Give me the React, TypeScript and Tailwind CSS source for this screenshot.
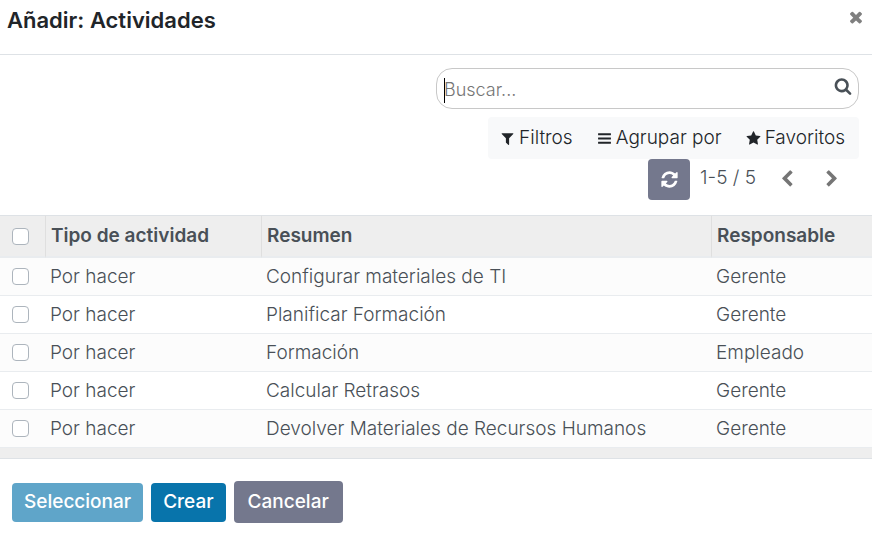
type IconProps = { path: string; className: string };

const ICONS = {
  filter:
    'M1595 295q17 41-14 70l-493 493v742q0 42-39 59-13 5-25 5-27 0-45-19l-256-256q-19-19-19-45v-486l-493-493q-31-29-14-70 17-39 59-39h1280q42 0 59 39z',
  bars: 'M1664 1344v128q0 26-19 45t-45 19h-1408q-26 0-45-19t-19-45v-128q0-26 19-45t45-19h1408q26 0 45 19t19 45zm0-512v128q0 26-19 45t-45 19h-1408q-26 0-45-19t-19-45v-128q0-26 19-45t45-19h1408q26 0 45 19t19 45zm0-512v128q0 26-19 45t-45 19h-1408q-26 0-45-19t-19-45v-128q0-26 19-45t45-19h1408q26 0 45 19t19 45z',
  star: 'M1728 647q0 22-26 48l-363 354 86 500q1 7 1 20 0 21-10.5 35.5t-30.5 14.5q-19 0-40-12l-449-236-449 236q-22 12-40 12-21 0-31.5-14.5t-10.5-35.5q0-6 2-20l86-500-364-354q-25-27-25-48 0-37 56-46l502-73 225-455q19-41 49-41t49 41l225 455 502 73q56 9 56 46z',
  refresh:
    'M1639 1056q0 5-1 7-64 268-268 434.5t-478 166.5q-146 0-282.5-55t-243.5-157l-129 129q-19 19-45 19t-45-19-19-45v-448q0-26 19-45t45-19h448q26 0 45 19t19 45-19 45l-137 137q71 66 161 102t187 36q134 0 250-65t186-179q11-17 53-117 8-23 30-23h192q13 0 22.5 9.5t9.5 22.5zm25-800v448q0 26-19 45t-45 19h-448q-26 0-45-19t-19-45 19-45l138-138q-148-137-349-137-134 0-250 65t-186 179q-11 17-53 117-8 23-30 23h-199q-13 0-22.5-9.5t-9.5-22.5v-7q65-268 270-434.5t480-166.5q146 0 284 55.5t245 156.5l130-129q19-19 45-19t45 19 19 45z',
  search:
    'M1216 832q0-185-131.5-316.5t-316.5-131.5-316.5 131.5-131.5 316.5 131.5 316.5 316.5 131.5 316.5-131.5 131.5-316.5zm512 832q0 52-38 90t-90 38q-54 0-90-38l-343-342q-179 124-399 124-143 0-273.5-55.5t-225-150-150-225-55.5-273.5 55.5-273.5 150-225 225-150 273.5-55.5 273.5 55.5 225 150 150 225 55.5 273.5q0 220-124 399l343 343q37 37 37 90z',
  times:
    'M1490 1322q0 40-28 68l-136 136q-28 28-68 28t-68-28l-294-294-294 294q-28 28-68 28t-68-28l-136-136q-28-28-28-68t28-68l294-294-294-294q-28-28-28-68t28-68l136-136q28-28 68-28t68 28l294 294 294-294q28-28 68-28t68 28l136 136q28 28 28 68t-28 68l-294 294 294 294q28 28 28 68z',
  left: 'M1427 301l-531 531 531 531q19 19 19 45t-19 45l-166 166q-19 19-45 19t-45-19l-742-742q-19-19-19-45t19-45l742-742q19-19 45-19t45 19l166 166q19 19 19 45t-19 45z',
  right:
    'M1363 877l-742 742q-19 19-45 19t-45-19l-166-166q-19-19-19-45t19-45l531-531-531-531q-19-19-19-45t19-45l166-166q19-19 45-19t45 19l742 742q19 19 19 45t-19 45z',
};

function Icon({ path, className }: IconProps) {
  return (
    <svg viewBox="0 0 1792 1792" fill="currentColor" aria-hidden="true" className={className}>
      <path d={path} />
    </svg>
  );
}

const ROWS = [
  ['Por hacer', 'Configurar materiales de TI', 'Gerente'],
  ['Por hacer', 'Planificar Formación', 'Gerente'],
  ['Por hacer', 'Formación', 'Empleado'],
  ['Por hacer', 'Calcular Retrasos', 'Gerente'],
  ['Por hacer', 'Devolver Materiales de Recursos Humanos', 'Gerente'],
];

function Tick({ label }: { label: string }) {
  return (
    <input
      type="checkbox"
      aria-label={label}
      className="block size-[17px] appearance-none rounded border border-[#adb5bd] bg-white checked:bg-[#0874ab]"
    />
  );
}

export default function App() {
  return (
    <div className="bg-white font-[Inter,'Noto_Sans',sans-serif] text-[19px] leading-7 font-light text-[#495057]">
      <header className="flex h-[55px] items-start justify-between border-b border-[#dee2e6] px-[7px] pt-1">
        <h1 className="text-[22px] leading-8 font-semibold text-[#212529]">Añadir: Actividades</h1>
        <button type="button" aria-label="Cerrar" className="mt-1 text-[#7f7f7f]">
          <Icon path={ICONS.times} className="size-[18px]" />
        </button>
      </header>

      <section className="flex flex-col items-end pt-[13px] pr-[13px]">
        <div className="relative flex h-[41px] w-[423px] items-center rounded-2xl border border-[#c8c8c8] pr-1.5 pl-[7px]">
          <input
            type="text"
            aria-label="Buscar"
            placeholder="Buscar..."
            className="h-full min-w-0 flex-1 pt-0.5 text-lg outline-none placeholder:text-[#757575]"
          />
          <span className="absolute top-[9px] left-[7px] h-[25px] w-px bg-black" />
          <button type="button" aria-label="Buscar" className="mb-1.5">
            <Icon path={ICONS.search} className="size-[18px]" />
          </button>
        </div>

        <div className="mt-2 flex h-[42px] items-center gap-6 rounded bg-[#f8f9fa] pr-3.5 pl-3 text-[#212529]">
          <button type="button" className="flex items-center gap-1">
            <Icon path={ICONS.filter} className="size-[15px]" />
            Filtros
          </button>
          <button type="button" className="flex items-center gap-1">
            <Icon path={ICONS.bars} className="size-[15px]" />
            Agrupar por
          </button>
          <button type="button" className="flex items-center gap-1">
            <Icon path={ICONS.star} className="size-[15px]" />
            Favoritos
          </button>
        </div>

        <div className="flex items-center pr-[18px]">
          <button
            type="button"
            aria-label="Actualizar"
            className="flex h-[41px] w-[42px] items-center justify-center rounded bg-[#74788d] text-white"
          >
            <Icon path={ICONS.refresh} className="size-[19px]" />
          </button>
          <span className="mb-1 ml-2.5">1-5 / 5</span>
          <button type="button" aria-label="Anterior" className="mb-0.5 ml-[22px] text-[#757575]">
            <Icon path={ICONS.left} className="size-[18px]" />
          </button>
          <button type="button" aria-label="Siguiente" className="mb-0.5 ml-[27px] text-[#757575]">
            <Icon path={ICONS.right} className="size-[18px]" />
          </button>
        </div>
      </section>

      <table className="mt-[15px] w-full table-fixed border-separate border-spacing-0 text-left">
        <colgroup>
          <col className="w-[45px]" />
          <col className="w-[216px]" />
          <col />
          <col className="w-[161px]" />
        </colgroup>
        <thead>
          <tr className="h-[43px] bg-[#eeeeee]">
            <th className="border-t border-b-2 border-t-[#dee2e6] border-b-[#e9ecef] pl-3">
              <Tick label="Seleccionar todo" />
            </th>
            {['Tipo de actividad', 'Resumen', 'Responsable'].map((title) => (
              <th
                key={title}
                className="border-t border-b-2 border-l border-t-[#dee2e6] border-b-[#e9ecef] border-l-[#dfdfdf] pl-[5px] font-semibold"
              >
                {title}
              </th>
            ))}
          </tr>
        </thead>
        <tbody>
          {ROWS.map((row, index) => (
            <tr key={row[1]} className="h-[38px] odd:bg-[#fcfcfc]">
              <td className="border-b border-[#e9ecef] pl-3">
                <Tick label={`Seleccionar fila ${index + 1}`} />
              </td>
              {row.map((value, column) => (
                <td key={column} className="border-b border-[#e9ecef] pl-[5px] whitespace-nowrap">
                  {value}
                </td>
              ))}
            </tr>
          ))}
        </tbody>
        <tfoot>
          <tr className="h-[11px] bg-[#eeeeee]">
            <td colSpan={4} className="border-b border-[#dee2e6] p-0" />
          </tr>
        </tfoot>
      </table>

      <footer className="flex items-center gap-2 px-3 pt-[22px] pb-[11px] font-medium text-white">
        <button type="button" disabled className="h-[39px] rounded bg-[#5fa5c9] px-3">
          Seleccionar
        </button>
        <button type="button" className="h-[39px] rounded bg-[#0874ab] px-3">
          Crear
        </button>
        <button type="button" className="h-[42px] rounded bg-[#74788d] px-3.5">
          Cancelar
        </button>
      </footer>
    </div>
  );
}
